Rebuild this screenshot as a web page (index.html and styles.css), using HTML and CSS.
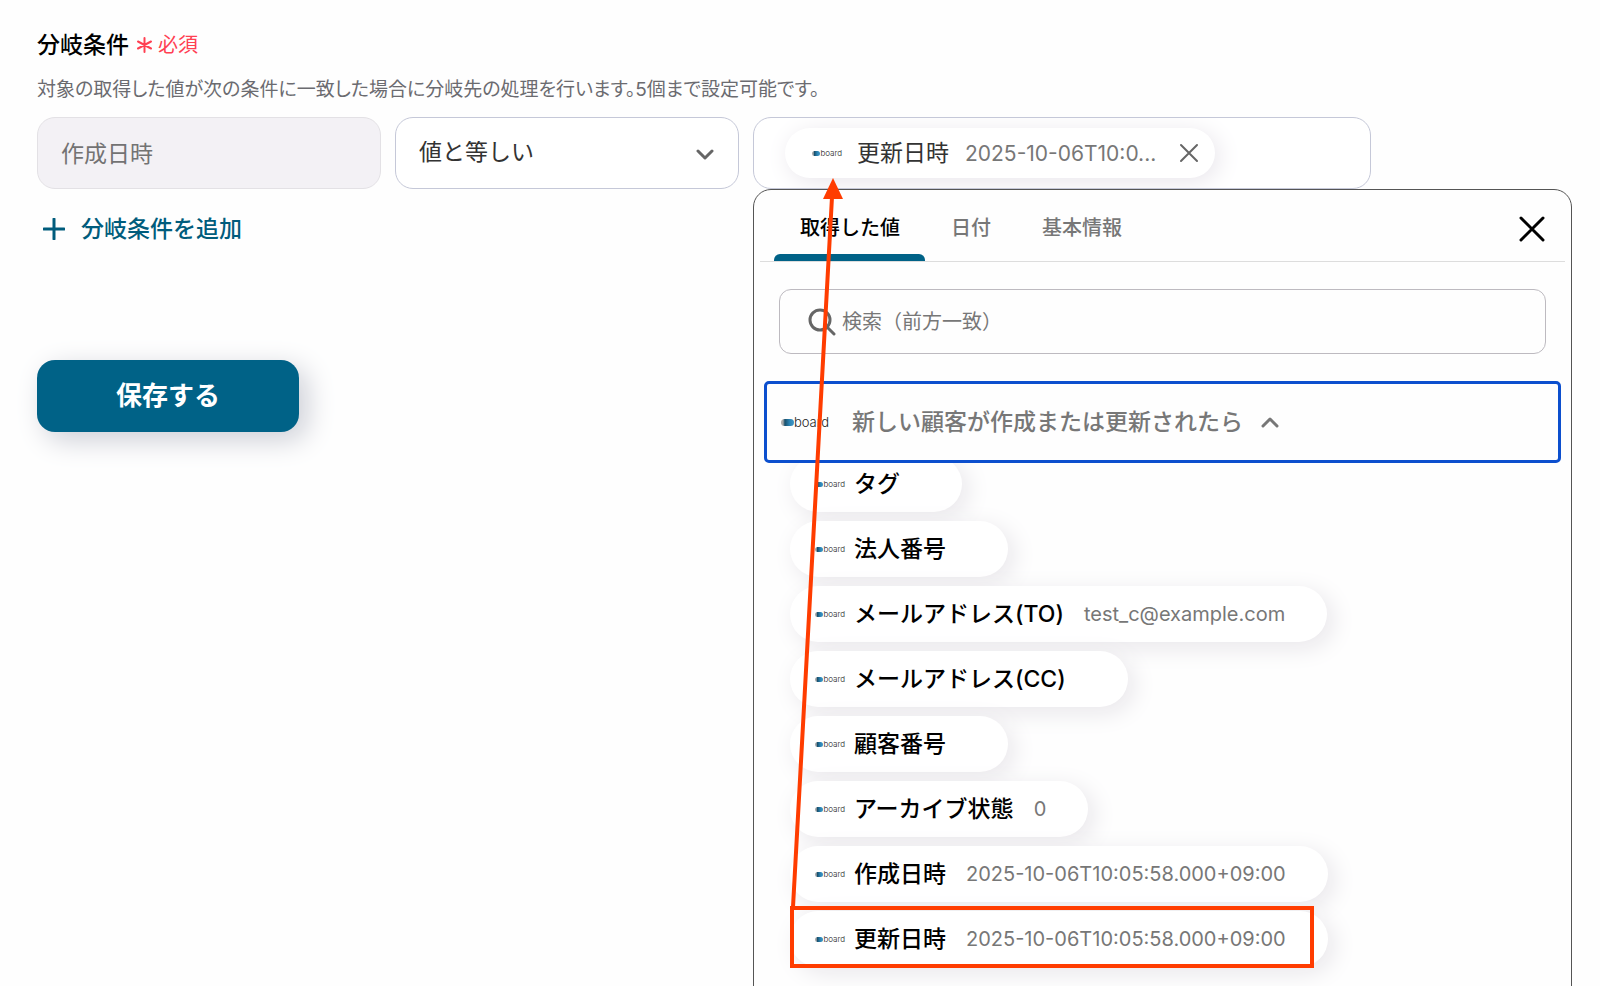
FILE: index.html
```
<!DOCTYPE html>
<html lang="ja">
<head>
  <meta charset="UTF-8" />
  <meta name="viewport" content="width=device-width, initial-scale=1.0"/>
  <title>分岐条件</title>
  <link rel="stylesheet" href="styles.css">
</head>
<body>

<form class="page" onsubmit="return false">
  <h1>分岐条件 <span class="required"><svg width="15" height="16" viewBox="0 0 15 16"><path d="M7.5 1v14M1 4.5l13 7M14 4.5l-13 7"/></svg>必須</span></h1>
  <p class="description">対象の取得した値が次の条件に一致した場合に分岐先の処理を行います。5個まで設定可能です。</p>

  <div class="condition">
    <input class="field" type="text" value="作成日時" aria-label="対象" disabled>
    <div class="select-wrap">
      <select class="field" aria-label="条件"><option>値と等しい</option></select>
      <svg class="chevron" width="18" height="12" viewBox="0 0 18 12"><path d="M2 2l7 7 7-7"/></svg>
    </div>
    <div class="value-wrap">
      <div class="field value-field">
        <div class="chip">
          <span class="logo small"><i></i>board</span>
          <span class="chip-name">更新日時</span>
          <span class="chip-value">2025-10-06T10:0...</span>
          <button type="button" class="icon-btn" aria-label="削除"><svg width="20" height="20" viewBox="0 0 20 20"><path d="M2 2l16 16M18 2L2 18" stroke="#666" stroke-width="2"/></svg></button>
        </div>
      </div>

      <div class="panel">
        <div class="tabs">
          <button type="button" class="tab active">取得した値</button>
          <button type="button" class="tab">日付</button>
          <button type="button" class="tab">基本情報</button>
          <button type="button" class="icon-btn close" aria-label="閉じる"><svg width="26" height="26" viewBox="0 0 26 26"><path d="M2 2l22 22M24 2L2 24" stroke="#000" stroke-width="3"/></svg></button>
        </div>
        <label class="search">
          <svg width="28" height="28" viewBox="0 0 28 28"><circle cx="12" cy="12" r="10"/><path d="M19 19l7 7"/></svg>
          <input type="text" placeholder="検索（前方一致）" aria-label="検索">
        </label>
        <button type="button" class="group">
          <span class="logo"><i></i>board</span>
          <span class="group-name">新しい顧客が作成または更新されたら</span>
          <svg width="18" height="12" viewBox="0 0 18 12"><path d="M2 10l7-7 7 7"/></svg>
        </button>
        <div class="items">
          <button type="button" class="item"><span class="logo small"><i></i>board</span><b>タグ</b><span class="item-value"></span></button>
          <button type="button" class="item"><span class="logo small"><i></i>board</span><b>法人番号</b><span class="item-value"></span></button>
          <button type="button" class="item"><span class="logo small"><i></i>board</span><b>メールアドレス(TO)</b><span class="item-value">test_c@example.com</span></button>
          <button type="button" class="item"><span class="logo small"><i></i>board</span><b>メールアドレス(CC)</b><span class="item-value"></span></button>
          <button type="button" class="item"><span class="logo small"><i></i>board</span><b>顧客番号</b><span class="item-value"></span></button>
          <button type="button" class="item"><span class="logo small"><i></i>board</span><b>アーカイブ状態</b><span class="item-value">0</span></button>
          <button type="button" class="item"><span class="logo small"><i></i>board</span><b>作成日時</b><span class="item-value">2025-10-06T10:05:58.000+09:00</span></button>
          <button type="button" class="item"><span class="logo small"><i></i>board</span><b>更新日時</b><span class="item-value">2025-10-06T10:05:58.000+09:00</span></button>
        </div>
      </div>

      <!-- arrow from the picked item to the field -->
      <svg class="callout" width="570" height="860" viewBox="0 0 570 860">
        <rect x="39" y="791" width="520" height="58"/>
        <path d="M40 790L79 80"/>
        <path class="head" d="M80 61l10 21H70z"/>
      </svg>
    </div>
  </div>

  <button type="button" class="add"><svg width="22" height="22" viewBox="0 0 22 22"><path d="M11 1v20M1 11h20"/></svg>分岐条件を追加</button>
  <button type="submit" class="save">保存する</button>
</form>

</body>
</html>
```
FILE: styles.css
```
* { box-sizing: border-box; }
body {
  font-family: Inter, "Noto Sans CJK JP", sans-serif;
  background: #fefefe;
  color: #000;
  margin: 0;
}
button, input, select { font-family: inherit; line-height: 1; }
button { border: none; background: none; padding: 0; cursor: pointer; }
svg { flex-shrink: 0; fill: none; stroke-linecap: round; stroke-linejoin: round; }

/* logo: pill mark + wordmark */
.logo { display: flex; align-items: center; flex-shrink: 0; width: 48px; font-size: 13px; line-height: 1; font-weight: 300; color: #222; }
.logo i { width: 14px; height: 7px; border-radius: 4px; background: linear-gradient(to right, #aaa 15%, #174f6c 30%, #2b83b3 65%, #3f95c4); }
.logo.small { width: 30px; font-size: 8px; }
.logo.small i { width: 9px; height: 5px; }

.page { height: 100vh; overflow: hidden; padding: 28px 229px 0 37px; }
h1 { display: flex; align-items: center; gap: 8px; margin: 0; font-size: 23px; line-height: 34px; font-weight: 500; }
.required { display: flex; align-items: center; gap: 6px; color: #ff4052; font-size: 20px; font-weight: 400; }
.required svg { stroke: #ff4052; stroke-width: 2; }
.description { margin: 12px 0; font-size: 19px; line-height: 31px; color: #6b6b70; font-feature-settings: "palt"; }

.condition { display: grid; grid-template-columns: 344fr 344fr 618fr; gap: 14px; }
.field { width: 100%; height: 72px; padding: 0 23px; border: 1px solid #c5c8d8; border-radius: 18px; background: #fff; color: #333; font-size: 23px; line-height: 1; }
.field:disabled { background: #f3f1f5; border-color: #e3e1e5; color: #737373; }
input.field { padding-bottom: 3px; }
.select-wrap, .value-wrap { position: relative; }
select.field { appearance: none; padding-bottom: 2px; }
.chevron { position: absolute; right: 25px; top: 32px; stroke: #666; stroke-width: 3; pointer-events: none; }
.value-field { display: flex; align-items: center; padding: 0 31px; overflow: hidden; }
.chip { display: flex; align-items: center; height: 50px; padding: 0 16px 0 27px; border-radius: 25px; background: #fff; box-shadow: 4px 4px 24px #e8e5eb; }
.chip-name { margin-left: 15px; }
.chip-value { margin: 0 23px 0 16px; font-size: 21px; color: #777; }
.icon-btn { display: flex; }

.panel { position: absolute; top: 72px; left: 0; width: calc(133% - 3px); min-height: 820px; padding: 0 6px; border: 1px solid #555; border-radius: 18px; background: #fefefe; }
.tabs { display: flex; align-items: stretch; height: 72px; padding: 0 20px 0 14px; border-bottom: 1px solid #ddd; }
.tab { position: relative; padding: 4px 25px 0 26px; font-size: 20px; font-weight: 500; color: #777; }
.tab.active { color: #000; }
.tab.active::after { content: ""; position: absolute; left: 0; right: 0; bottom: 0; height: 7px; border-radius: 6px 6px 0 0; background: #006287; }
.close { margin-left: auto; padding-top: 6px; align-items: center; }
.search { display: flex; align-items: center; gap: 6px; height: 65px; margin: 27px 19px; padding: 0 28px; border: 1px solid #bdbac0; border-radius: 12px; }
.search svg { stroke: #666; stroke-width: 3; }
.search input { flex: 1; border: none; outline: none; background: none; padding: 0; font-size: 20px; line-height: 30px; }
.search input::placeholder { color: #777; }
.group { position: relative; z-index: 1; display: flex; align-items: center; width: calc(100% - 8px); height: 82px; margin: 0 4px; padding: 0 14px; border: 3px solid #0c4fce; border-radius: 5px; background: #fefefe; color: #777; font-size: 23px; font-weight: 500; }
.group-name { margin: 0 18px 0 23px; }
.group svg { stroke: #777; stroke-width: 3; }
.items { display: flex; flex-direction: column; align-items: flex-start; gap: 9px; margin: -7px 0 0 30px; }
.item { display: flex; align-items: center; height: 56px; padding: 0 42px 0 25px; border-radius: 28px; background: #fff; box-shadow: 6px 6px 24px #e8e6ea; font-size: 23px; }
.item b { margin: 0 20px 0 9px; font-weight: 500; }
.item-value { font-size: 20px; color: #777; }

.callout { position: absolute; z-index: 2; top: 0; left: 0; stroke: #ff3c00; stroke-width: 4; stroke-linejoin: miter; pointer-events: none; }
.callout .head { fill: #ff3c00; stroke: none; }

.add { display: flex; align-items: center; gap: 16px; margin-top: 22px; padding: 0 6px; font-size: 23px; line-height: 36px; font-weight: 500; color: #005c7c; }
.add svg { stroke: #005c7c; stroke-width: 3; }
.save { margin-top: 113px; width: 262px; height: 72px; border-radius: 18px; background: #006287; color: #fff; font-size: 26px; font-weight: 700; box-shadow: 8px 8px 28px #ccced6; }
```
